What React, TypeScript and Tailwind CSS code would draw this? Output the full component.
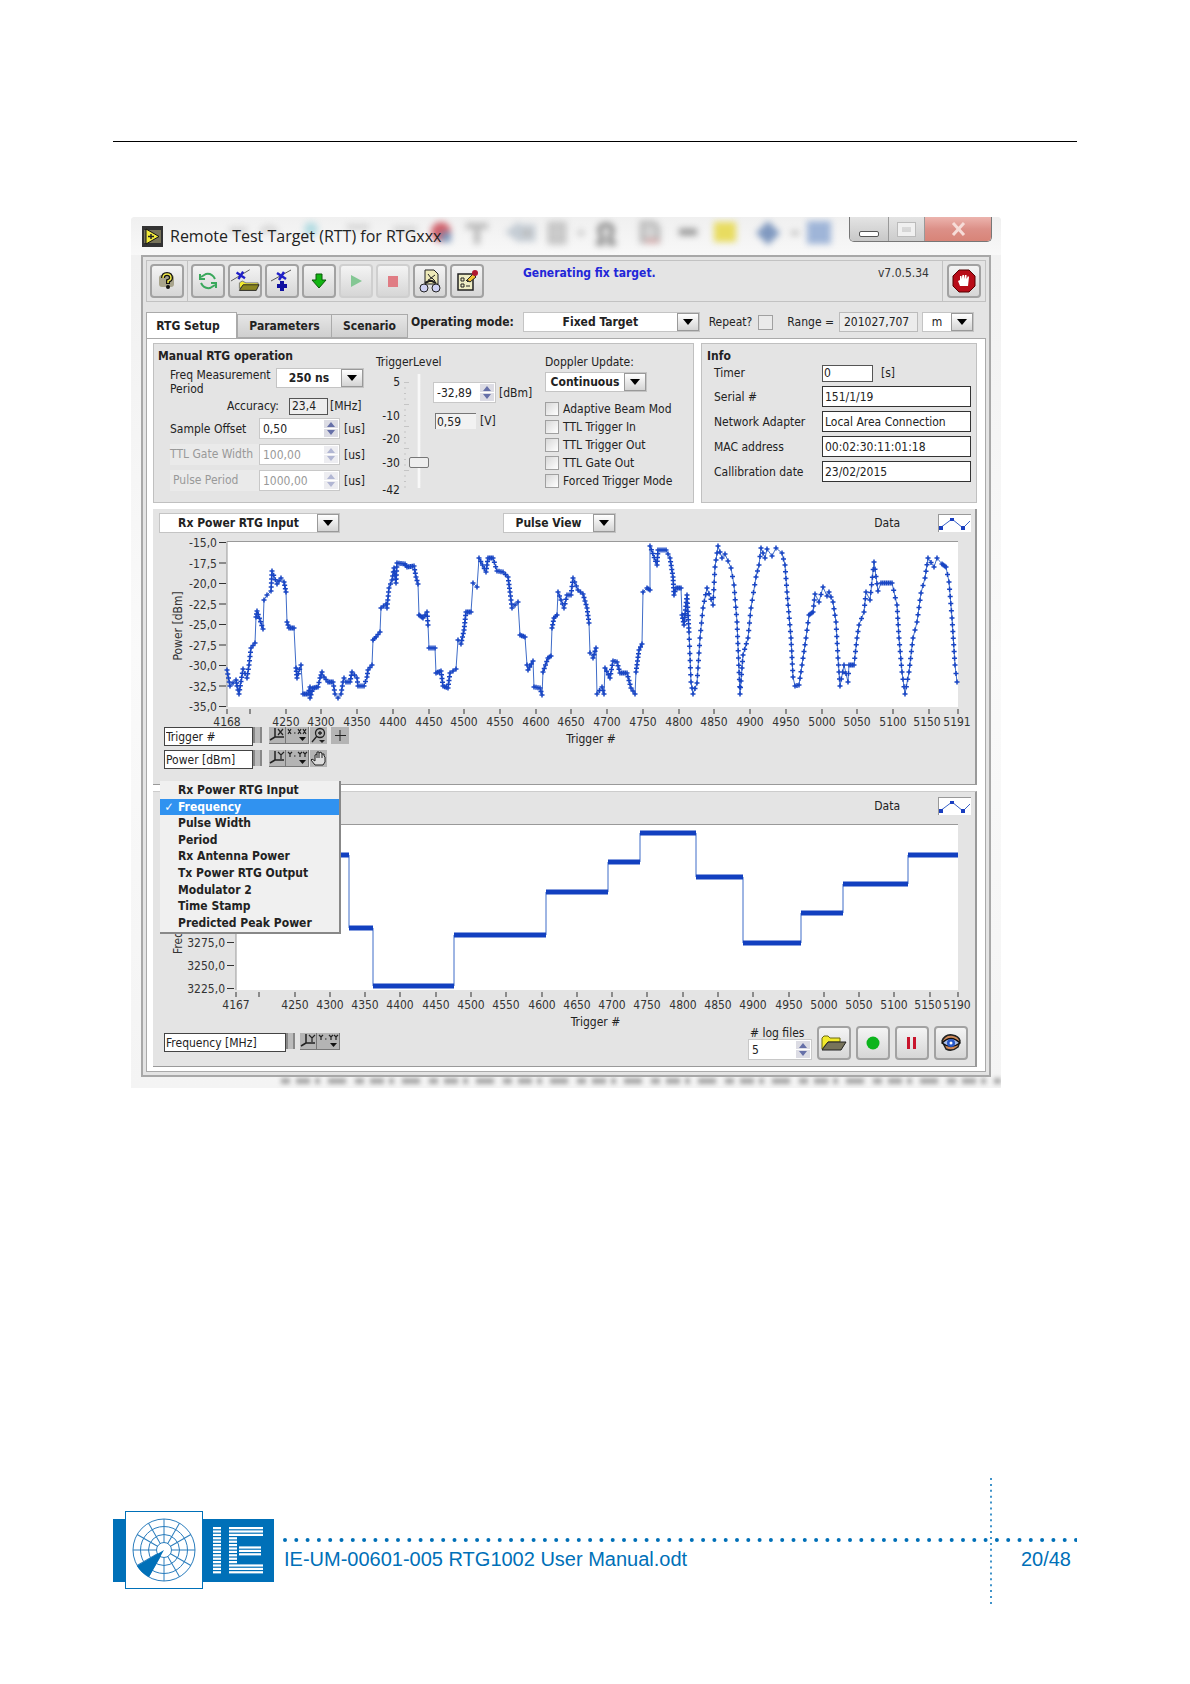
import type { ReactNode } from "react";

const rxPower: [number, number][] = [
  [0, 128], [3, 144], [9, 138], [10, 144], [12, 152], [16, 127], [20, 136], [22, 123], [24, 106], [28, 101], [29, 75], [30, 69],
  [36, 87], [37, 58], [40, 53], [44, 49], [45, 29], [50, 42], [54, 36], [57, 40], [59, 50], [60, 80], [62, 86], [67, 86],
  [69, 126], [70, 136], [74, 123], [76, 152], [81, 152], [83, 145], [83, 156], [86, 146], [91, 145], [93, 136], [95, 130], [97, 135],
  [101, 140], [106, 140], [108, 152], [111, 156], [114, 152], [116, 140], [117, 136], [119, 140], [123, 140], [125, 130], [130, 136],
  [131, 144], [137, 144], [140, 135], [141, 128], [145, 123], [146, 98], [149, 95], [153, 90], [154, 66], [159, 62], [160, 66],
  [162, 46], [165, 38], [167, 26], [169, 41], [170, 21], [178, 22], [180, 25], [187, 24], [189, 35], [191, 42], [192, 73], [196, 76],
  [200, 70], [201, 83], [202, 106], [208, 106], [209, 131], [214, 129], [216, 144], [221, 146], [223, 131], [229, 127], [231, 98],
  [234, 102], [237, 88], [239, 70], [244, 70], [246, 41], [250, 45], [252, 16], [259, 30], [261, 16], [266, 16], [270, 29],
  [276, 30], [281, 35], [283, 50], [285, 66], [291, 60], [293, 93], [298, 95], [300, 123], [301, 128], [306, 119], [307, 145],
  [313, 146], [315, 153], [316, 130], [321, 116], [324, 114], [325, 86], [327, 76], [330, 73], [331, 50], [337, 66], [340, 53],
  [344, 53], [346, 36], [351, 48], [356, 52], [360, 66], [362, 81], [363, 111], [366, 116], [369, 106], [370, 152], [375, 145],
  [377, 152], [378, 126], [383, 136], [386, 119], [390, 120], [393, 131], [400, 131], [404, 146], [408, 152], [409, 130],
  [412, 108], [415, 102], [416, 50], [420, 46], [423, 48], [423, 4], [430, 23], [431, 8], [439, 8], [443, 16], [446, 35],
  [447, 53], [449, 46], [454, 46], [455, 73], [457, 83], [460, 53], [462, 90], [464, 140], [466, 152], [470, 141], [473, 96],
  [476, 66], [480, 46], [486, 63], [488, 25], [491, 4], [495, 16], [498, 12], [504, 26], [507, 43], [510, 80], [513, 152],
  [516, 113], [521, 96], [524, 66], [529, 35], [532, 23], [534, 6], [538, 16], [540, 7], [545, 14], [549, 6], [555, 11],
  [558, 23], [560, 50], [564, 96], [566, 135], [568, 144], [572, 143], [575, 123], [579, 96], [582, 73], [586, 70], [588, 52],
  [592, 60], [596, 45], [600, 54], [602, 50], [606, 60], [609, 80], [611, 116], [613, 144], [617, 123], [621, 140], [622, 123],
  [627, 123], [630, 96], [632, 83], [637, 70], [639, 50], [643, 58], [647, 20], [651, 49], [654, 41], [665, 41], [670, 63],
  [672, 96], [675, 130], [678, 152], [682, 130], [686, 96], [690, 80], [694, 51], [698, 36], [701, 16], [707, 25], [710, 16],
  [715, 22], [719, 25], [722, 40], [725, 76], [728, 123], [730, 140],
];

// start, end, level
const freqSteps = [
  [0, 113, 31], [113, 137, 104], [137, 218, 162], [218, 310, 111], [310, 372, 68], [372, 404, 38],
  [404, 460, 9], [460, 507, 53], [507, 565, 119], [565, 607, 89], [607, 672, 60], [672, 722, 31],
];

const menuItems = [
  "Rx Power RTG Input", "Frequency", "Pulse Width", "Period", "Rx Antenna Power",
  "Tx Power RTG Output", "Modulator 2", "Time Stamp", "Predicted Peak Power",
];

const crossMarks = () => {
  let d = "";
  rxPower.forEach(([x, y], i) => {
    const [nx, ny] = rxPower[i + 1] ?? [x, y];
    const steep = Math.abs(ny - y) > 21 && Math.abs(nx - x) < 3 && x < 460;
    const flat = Math.abs(ny - y) < 4;
    const step = flat ? 2 : x > 460 ? 7 : 4;
    const n = steep ? 1 : Math.max(1, Math.round(Math.hypot(nx - x, ny - y) / step));
    for (let k = 0; k < n; k++) {
      const cx = x + ((nx - x) * k) / n;
      const cy = y + ((ny - y) * k) / n;
      d += `M${cx - 2.5} ${cy}h5M${cx} ${cy - 2.5}v5`;
    }
  });
  return d;
};

const Combo = ({ label, value, className, bold = true }: { label: string; value: string; className: string; bold?: boolean }) => (
  <div className={`flex h-5 items-stretch border border-[#c4c4c4] bg-white ${className}`}>
    <select aria-label={label} className={`min-w-0 flex-1 appearance-none bg-white px-1 text-center whitespace-pre outline-none ${bold ? "font-bold" : ""}`}>
      <option>{value}</option>
    </select>
    <span className="pointer-events-none flex w-[22px] items-center justify-center border border-[#999] bg-linear-to-b from-white to-[#d4d4d4]">
      <svg width="10" height="6"><path d="M0 0h10L5 6z" fill="#000" /></svg>
    </span>
  </div>
);

const Spinner = ({ id, label, value, className, disabled }: { id?: string; label?: string; value: string; className: string; disabled?: boolean }) => (
  <div className={`flex h-[21px] items-center border border-[#c8c8c8] bg-white pr-px ${className}`}>
    <input id={id} aria-label={label} defaultValue={value} disabled={disabled} className="w-0 min-w-0 flex-1 pl-[3px] outline-none disabled:text-[#999]" />
    <svg width="14" height="17" className={disabled ? "opacity-50" : ""}>
      <rect width="14" height="17" fill="#dcdce4" />
      <path d="M7 2l4 5H3zM7 15l4-5H3z" fill="#6670a8" />
      <path d="M0 8.5h14" stroke="#fff" />
    </svg>
  </div>
);

const ToolButton = ({ label, faded, children }: { label: string; faded?: boolean; children: ReactNode }) => (
  <button
    aria-label={label}
    className={`flex size-[34px] shrink-0 items-center justify-center rounded-[4px] border-2 bg-linear-to-b from-[#f4f4f4] to-[#d6d6d6] ${faded ? "border-[#cfcfcf]" : "border-[#a2a2a2]"}`}
  >
    {children}
  </button>
);

const CheckBox = ({ label }: { label: string }) => (
  <label className="flex h-[18px] items-center gap-1 whitespace-nowrap">
    <input type="checkbox" className="size-[14px] appearance-none border border-[#a0a0a0] bg-linear-to-br from-[#d8d8d8] to-white" />
    {label}
  </label>
);

const Folder = () => (
  <svg width="26" height="18" viewBox="0 0 26 18">
    <path d="M1 15V4l2-2h4l2 2h10v4H7z" fill="#f2ea2c" stroke="#6c6a10" />
    <path d="M1 16L7 8h18l-5 8z" fill="#77735a" stroke="#222" />
  </svg>
);

const Legend = () => (
  <svg width="33" height="18" className="border-t border-l border-[#999] bg-white">
    <path d="M1 13L13 4l11 9 7-7" fill="none" stroke="#3a62c8" />
    <path d="M0 11h4v4H0zM11 3h4v3h-4zM22 11h4v4h-4z" fill="#1a3fc0" />
  </svg>
);

const ScaleTools = ({ axis }: { axis: "X" | "Y" }) => (
  <div className="flex">
    <button aria-label={`${axis} scale lock`} className="h-[17px] bg-[#b4b4b4]">
      <svg width="17" height="17" viewBox="0 0 17 17">
        <path d="M0 16.500h17M16.500 0v17" stroke="#777" />
        <path d="M1 13l5-3M6 1v9h9" fill="none" stroke="#222" strokeWidth="1.500" />
        <path d={axis === "X" ? "M9 2l5 6M14 2l-5 6" : "M9 2l3 3 3-3M12 5v4"} fill="none" stroke="#222" strokeWidth="1.200" />
      </svg>
    </button>
    <button aria-label={`${axis} scale format`} className="h-[17px] bg-[#b4b4b4]">
      <svg width="23" height="17" viewBox="0 0 23 17">
        <path d="M0 16.500h23M22.500 0v17" stroke="#777" />
        <path
          d={axis === "X" ? "M2 2l3 5M5 2l-3 5M12 2l3 5M15 2l-3 5M17 2l3 5M20 2l-3 5M8 6h1.500" : "M2 2l2 2 2-2M4 4v3M12 2l2 2 2-2M14 4v3M17 2l2 2 2-2M19 4v3M8 6h1.500"}
          fill="none" stroke="#222" strokeWidth="1.200"
        />
        <path d="M13 10h7l-3.500 4z" fill="#111" />
      </svg>
    </button>
  </div>
);

const ScaleName = ({ value, className }: { value: string; className: string }) => (
  <div className="flex">
    <input aria-label="Scale name" defaultValue={value} className={`h-[19px] border border-[#444] bg-white pl-px outline-none ${className}`} />
    <span className="h-4 w-[9px] border-x-2 border-[#888] bg-[#bbb]" />
  </div>
);

const TimeAxis = ({ first, last, left }: { first: number; last: number; left: number }) => {
  const scale = (805 - left) / (last - first);
  const ticks = Array.from({ length: 20 }, (_, i) => 4200 + i * 50);
  return (
    <g textAnchor="middle" fill="#333">
      {[first, ...ticks, last].map((t) => {
        const x = Math.round(left + (t - first) * scale);
        return (
          <g key={t}>
            <path d={`M${x} 172v5`} stroke="#333" />
            {t !== 4200 && <text x={t === last ? x - 1 : t === 5150 ? x - 2 : x} y={189}>{t}</text>}
          </g>
        );
      })}
    </g>
  );
};

const PowerPlot = () => (
  <svg viewBox="0 0 822 194" className="w-full text-[12px]">
    <rect x="74" y="5" width="731" height="165" fill="#fff" />
    <path d="M74 170V4.500h731" fill="none" stroke="#999" />
    <g textAnchor="end" fill="#333">
      {["-15,0", "-17,5", "-20,0", "-22,5", "-25,0", "-27,5", "-30,0", "-32,5", "-35,0"].map((t, i) => (
        <g key={t}>
          <text x="64" y={10 + i * 20.500}>{t}</text>
          <path d={`M66 ${5.500 + i * 20.500}h7`} stroke="#333" />
        </g>
      ))}
    </g>
    <text transform="translate(29 89) rotate(-90)" textAnchor="middle" fill="#333">Power [dBm]</text>
    <g transform="translate(74 5)" fill="none">
      <polyline points={rxPower.map((p) => p.join()).join(" ")} stroke="#3f6cc8" />
      <path d={crossMarks()} stroke="#1845c4" strokeWidth="1.500" />
    </g>
    <TimeAxis first={4168} last={5191} left={74} />
  </svg>
);

const FrequencyPlot = () => (
  <svg viewBox="0 0 822 194" className="w-full text-[12px]">
    <rect x="83" y="5" width="722" height="165" fill="#fff" />
    <path d="M83 170V4.500h722" fill="none" stroke="#999" />
    <g textAnchor="end" fill="#333">
      {[3275, 3250, 3225].map((t, i) => (
        <g key={t}>
          <text x="72" y={127 + i * 23}>{t},0</text>
          <path d={`M74 ${122.500 + i * 23}h7`} stroke="#333" />
        </g>
      ))}
    </g>
    <text transform="translate(29 134) rotate(-90)" fill="#333">Frequency [MHz]</text>
    <g transform="translate(83 4)" fill="none">
      <polyline points={freqSteps.map(([a, b, y]) => `${a},${y} ${b},${y}`).join(" ")} stroke="#3f6cc8" />
      {freqSteps.map(([a, b, y]) => (
        <path key={a} d={`M${a} ${y}H${b}`} stroke="#1240c0" strokeWidth="5" />
      ))}
    </g>
    <TimeAxis first={4167} last={5190} left={83} />
  </svg>
);

const TitleBar = () => (
  <div className="relative flex h-[38px] items-start justify-between overflow-hidden bg-linear-to-b from-[#f0f0f0] to-[#f8f8f8]">
    <svg className="absolute inset-0 blur-[3px]" width="870" height="38" aria-hidden="true">
      <g fill="none" stroke="#bbb" strokeWidth="5">
        <path d="M98 13h18M130 16q8-10 16 0M216 10h22M262 12h24" opacity=".6" />
        <path d="M335 9h22M346 9v18" strokeWidth="6" />
        <path d="M378 15l8-6v12zM390 10h12v12h-12z" fill="#bbb" stroke="#c4ccd4" />
        <path d="M419 7h14v18h-14zM447 16h6" fill="#ccc" stroke="#c4c4c4" />
        <path d="M465 26h6v-6q-6-12 4-12t4 12v6h6" stroke="#8c8c8c" />
        <path d="M511 6h12l4 5v13h-16z" fill="#d4d4d4" stroke="#bbb" />
        <path d="M548 15h18" stroke="#999" strokeWidth="7" />
      </g>
      <path d="M514 24h14" stroke="#e0a0a0" strokeWidth="3" />
      <circle cx="310" cy="15" r="10" fill="#d0606a" />
      <path d="M310 15h10v10h-10z" fill="#7c94b8" />
      <circle cx="180" cy="12" r="7" fill="#b4dce2" />
      <rect x="583" y="5" width="22" height="20" fill="#e8dc60" />
      <path d="M637 4l12 12-12 12-12-12z" fill="#7f98bf" />
      <rect x="676" y="4" width="24" height="23" fill="#9fb5d8" />
      <path d="M660 16h8" stroke="#bbb" strokeWidth="4" />
    </svg>
    <div className="relative flex items-center gap-[7px] pt-[7px] pl-[11px]">
      <svg width="21" height="21" viewBox="0 0 21 21">
        <rect width="21" height="21" fill="#333" />
        <path d="M2 4h17v13H2z" fill="#77735a" />
        <path d="M4 3l13 7.500L4 18z" fill="#f4ec3c" stroke="#111" />
        <path d="M6 10.500h6M9 8v5" stroke="#222" strokeWidth="1.500" />
      </svg>
      <h1 className="font-['Open_Sans','Noto_Sans',sans-serif] text-[16px] leading-6 text-[#222]">Remote Test Target (RTT) for RTGxxx</h1>
    </div>
    <div className="relative mr-[9px] flex h-[25px] overflow-hidden rounded-b-[5px] border border-t-0 border-[#777]">
      <button aria-label="Minimize" className="flex w-[39px] items-end justify-center border-r border-[#999] bg-linear-to-b from-[#e4e4e4] to-[#c8c8c8] pb-1">
        <span className="h-[6px] w-5 rounded-[2px] border border-[#555] bg-white" />
      </button>
      <button aria-label="Maximize" className="flex w-9 items-center justify-center border-r border-[#999] bg-linear-to-b from-[#e4e4e4] to-[#ccc]">
        <span className="h-[13px] w-[17px] border-4 border-[#f0f0f0] outline outline-[#bbb]" />
      </button>
      <button aria-label="Close" className="flex w-[66px] items-center justify-center bg-linear-to-b from-[#ecb4ae] via-[#dc9088] to-[#d88478]">
        <svg width="15" height="14"><path d="M2 1l11 12M13 1L2 13" stroke="#f6dcd8" strokeWidth="3" /></svg>
      </button>
    </div>
  </div>
);

const Toolbar = () => (
  <div className="flex h-[42px] items-stretch border border-[#c2c2c2]">
    <div className="flex items-center border-r border-[#c2c2c2] px-[3px]">
      <ToolButton label="Help">
        <svg width="18" height="18" viewBox="0 0 18 18">
          <rect x="1" y="3" width="15" height="12" rx="3" fill="#a8a48c" />
          <path d="M5 6q0-4 4-4t4 4q0 2-3 3v3" fill="none" stroke="#111" strokeWidth="4" />
          <path d="M5 6q0-4 4-4t4 4q0 2-3 3v2" fill="none" stroke="#f2ea4a" strokeWidth="1.500" />
          <circle cx="10" cy="15" r="2" fill="#111" />
        </svg>
      </ToolButton>
    </div>
    <div className="flex items-center gap-[3px] pl-[3px]">
      <ToolButton label="Refresh">
        <svg width="20" height="20" viewBox="0 0 20 20" fill="none" stroke="#3aa85c" strokeWidth="2">
          <path d="M17 8Q14 2 8 3L3 6M2 3v5h5M3 12q3 6 9 5l5-3M18 17v-5h-5" />
        </svg>
      </ToolButton>
      <ToolButton label="Open trajectory">
        <svg width="32" height="28" viewBox="0 0 32 28">
          <path d="M1 14L21 2" stroke="#555" />
          <path d="M7 5l9 6M14 4l-5 8" stroke="#2020c8" strokeWidth="2.500" />
          <path d="M10 22v-6l3-2 4 2h13v3H15z" fill="#f2ea2c" stroke="#777" />
          <path d="M10 24l4-6h17l-3 6z" fill="#8a8420" stroke="#222" />
        </svg>
      </ToolButton>
      <ToolButton label="Add point">
        <svg width="26" height="26" viewBox="0 0 26 26">
          <path d="M2 13L22 2" stroke="#555" />
          <path d="M8 5l9 6M15 4l-5 8" stroke="#2020c8" strokeWidth="2.500" />
          <path d="M13 13v10M8 18h10" stroke="#1010a0" strokeWidth="4" />
        </svg>
      </ToolButton>
      <ToolButton label="Download">
        <svg width="16" height="16"><path d="M5 1h6v6h4l-7 8-7-8h4z" fill="#12b512" stroke="#0a5a0a" /></svg>
      </ToolButton>
      <ToolButton label="Play" faded>
        <svg width="14" height="14"><path d="M2 1l11 6-11 6z" fill="#84c794" /></svg>
      </ToolButton>
      <ToolButton label="Stop" faded>
        <svg width="12" height="12"><path d="M1 1h10v11H1z" fill="#e07c84" /></svg>
      </ToolButton>
      <ToolButton label="View log">
        <svg width="24" height="26" viewBox="0 0 24 26" stroke="#222">
          <path d="M7 2h9l4 4v10H7z" fill="#eeeab8" />
          <path d="M10 6l3 4 4-3M10 12l4-2 3 3" fill="none" />
          <path d="M7 15l4-2h3l4 2" fill="none" strokeWidth="2" />
          <circle cx="6" cy="20" r="4" fill="#cfd2f4" />
          <circle cx="18" cy="20" r="4" fill="#cfd2f4" />
        </svg>
      </ToolButton>
      <ToolButton label="Edit configuration">
        <svg width="24" height="24" viewBox="0 0 24 24">
          <path d="M3 5h15v16H3z" fill="#eeecc4" stroke="#222" strokeWidth="1.500" />
          <path d="M6 9h3v3H6zM6 15h3v3H6zM11 11l2 2 3-4M11 17h4" fill="none" stroke="#222" />
          <path d="M12 11l6-6 3 3-6 5z" fill="#f0c030" stroke="#222" />
          <circle cx="20" cy="4" r="3" fill="#b01830" />
        </svg>
      </ToolButton>
    </div>
    <p className="ml-[39px] flex-1 pt-1 font-bold leading-4 text-[#2226d8]">Generating fix target.</p>
    <p className="mr-[13px] pt-1 leading-4 text-[#333]">v7.0.5.34</p>
    <div className="flex items-center border-l border-[#c2c2c2] px-1">
      <ToolButton label="Exit">
        <svg width="24" height="24" viewBox="0 0 24 24">
          <path d="M7 1h10l6 6v10l-6 6H7l-6-6V7z" fill="#b80c18" stroke="#500" />
          <path d="M8 17l-2-5 2-1V7h1.500v3l1-4H12v4l1-4h1.500v4l1.500-3 1 1-1 9z" fill="#fff" />
        </svg>
      </ToolButton>
    </div>
  </div>
);

const TabRow = () => (
  <div className="flex h-9 items-center pt-1">
    <div role="tablist" className="flex items-end self-end font-bold">
      <button role="tab" aria-selected="true" className="h-[26px] w-[91px] border border-b-0 border-[#aaa] bg-white pr-[7px]">RTG Setup</button>
      <button role="tab" aria-selected="false" className="h-6 w-[95px] border border-[#aaa] bg-linear-to-b from-[#e6e6e6] to-[#cfcfcf]">Parameters</button>
      <button role="tab" aria-selected="false" className="h-6 w-[76px] border border-l-0 border-[#aaa] bg-linear-to-b from-[#e6e6e6] to-[#cfcfcf]">Scenario</button>
    </div>
    <span className="ml-[3px] w-28 whitespace-nowrap font-bold">Operating mode:</span>
    <Combo label="Operating mode" value="Fixed Target" className="flex-1" />
    <label className="ml-[9px] flex items-center gap-[6px]">
      Repeat?
      <input type="checkbox" className="size-[15px] appearance-none border border-[#a0a0a0] bg-[#eaeaea]" />
    </label>
    <label htmlFor="range" className="ml-[14px] whitespace-nowrap">Range =</label>
    <input id="range" defaultValue="201027,707" className="ml-[5px] h-5 w-[79px] border border-[#bbb] bg-[#ececec] pl-1 outline-none" />
    <Combo label="Range unit" value="m" bold={false} className="mr-3 ml-1 w-[52px]" />
  </div>
);

const ManualPanel = () => (
  <fieldset className="flex h-40 min-w-0 flex-1 border border-[#c0c0c0] bg-[#e4e4e4]">
    <div className="w-[222px] pt-1 pl-1">
      <h2 className="text-[12px] leading-4 font-bold">Manual RTG operation</h2>
      <div className="flex items-start justify-between pt-1 pl-3">
        <span className="leading-[14px] whitespace-nowrap">Freq Measurement<br />Period</span>
        <Combo label="Freq Measurement Period" value="250 ns" className="mr-3 w-[88px]" />
      </div>
      <div className="flex h-5 items-center justify-end gap-[2px]">
        <label htmlFor="accuracy" className="pr-2">Accuracy:</label>
        <input id="accuracy" readOnly defaultValue="23,4" className="h-[17px] w-[39px] border border-[#555] bg-[#eee] pl-[2px]" />
        <span className="w-[46px]">[MHz]</span>
      </div>
      <div className="grid grid-cols-[89px_81px_1fr] items-center gap-y-[5px] pt-[2px] pl-3">
        <label htmlFor="offset">Sample Offset</label>
        <Spinner id="offset" value="0,50" className="w-full" />
        <span className="pl-1">[us]</span>
        <label htmlFor="gate" className="h-[21px] bg-[#eaeaea] leading-[21px] whitespace-nowrap text-[#999]">TTL Gate Width</label>
        <Spinner id="gate" value="100,00" className="w-full" disabled />
        <span className="pl-1">[us]</span>
        <label htmlFor="period" className="h-[21px] bg-[#eaeaea] pl-[3px] leading-[21px] text-[#999]">Pulse Period</label>
        <Spinner id="period" value="1000,00" className="w-full" disabled />
        <span className="pl-1">[us]</span>
      </div>
    </div>
    <div className="w-[169px] pt-[10px]">
      <label htmlFor="level" className="block leading-4">TriggerLevel</label>
      <div className="flex">
        <div className="grid w-6 grid-rows-[34px_23px_24px_27px_16px] pt-1 text-right leading-4">
          <span>5</span><span>-10</span><span>-20</span><span>-30</span><span>-42</span>
        </div>
        <svg width="7" height="118" className="ml-[2px]">
          {Array.from({ length: 20 }, (_, i) => <path key={i} d={`M2 ${12.500 + i * 5.500}h${i % 4 ? 2 : 5}`} stroke="#c4c4c4" />)}
        </svg>
        <input
          id="level" type="range" min="-42" max="5" defaultValue="-33"
          className="mt-1 h-[114px] w-5 appearance-none bg-linear-to-r from-transparent from-40% via-white via-50% to-transparent to-60% [direction:rtl] [writing-mode:vertical-lr] [&::-webkit-slider-thumb]:h-[11px] [&::-webkit-slider-thumb]:w-5 [&::-webkit-slider-thumb]:appearance-none [&::-webkit-slider-thumb]:rounded-[2px] [&::-webkit-slider-thumb]:border [&::-webkit-slider-thumb]:border-[#777] [&::-webkit-slider-thumb]:bg-[#eee]"
        />
        <div className="pt-3 pl-1">
          <div className="flex items-center gap-[3px]">
            <Spinner label="Trigger level dBm" value="-32,89" className="w-[63px]" />
            <span>[dBm]</span>
          </div>
          <div className="flex items-center gap-1 pt-[9px] pl-[2px]">
            <input aria-label="Trigger level volts" defaultValue="0,59" className="h-4 w-[41px] border-t border-l border-[#777] bg-[#f2f2f2] pl-px outline-none" />
            <span>[V]</span>
          </div>
        </div>
      </div>
    </div>
    <div className="flex-1 pt-[10px]">
      <span className="block leading-4">Doppler Update:</span>
      <Combo label="Doppler Update" value="Continuous" className="mt-[2px] mb-2 w-[102px]" />
      {["Adaptive Beam Mod", "TTL Trigger In", "TTL Trigger Out", "TTL Gate Out", "Forced Trigger Mode"].map((t) => <CheckBox key={t} label={t} />)}
    </div>
  </fieldset>
);

const info = [
  ["Serial #", "151/1/19"],
  ["Network Adapter", "Local Area Connection"],
  ["MAC address", "00:02:30:11:01:18"],
  ["Callibration date", "23/02/2015"],
];

const InfoPanel = () => (
  <fieldset className="h-40 w-[276px] border border-[#c0c0c0] bg-[#e4e4e4] pt-1 pr-[5px] pl-[5px]">
    <h2 className="text-[12px] leading-4 font-bold">Info</h2>
    <div className="grid grid-cols-[108px_1fr] gap-y-1 pl-[7px]">
      <label htmlFor="timer" className="leading-[18px]">Timer</label>
      <div className="flex items-center gap-2">
        <input id="timer" defaultValue="0" className="h-[17px] w-[51px] border border-[#555] bg-white pl-px outline-none" />
        <span>[s]</span>
      </div>
      {info.map(([label, value]) => (
        <div key={label} className="col-span-2 grid grid-cols-subgrid items-center">
          <label htmlFor={label}>{label}</label>
          <input id={label} readOnly defaultValue={value} className="h-[21px] w-full border border-[#333] bg-white pl-[2px] outline-none" />
        </div>
      ))}
    </div>
  </fieldset>
);

const PowerPanel = () => (
  <section className="h-[276px] border-r-2 border-b border-[#999] bg-[#e4e4e4]">
    <div className="flex h-7 items-center">
      <Combo label="Upper graph source" value="Rx Power RTG Input" className="ml-[6px] w-[181px]" />
      <Combo label="View" value="Pulse  View" className="ml-[163px] w-[113px]" />
      <span className="mr-[38px] ml-auto">Data</span>
      <span className="mr-1"><Legend /></span>
    </div>
    <PowerPlot />
    <div className="-mt-1 grid grid-cols-[1fr_auto_1fr] pl-[11px]">
      <div className="flex flex-col gap-1">
        <div className="flex gap-[7px]">
          <ScaleName value="Trigger #" className="w-[89px]" />
          <div className="flex items-start gap-px">
            <ScaleTools axis="X" />
            <button aria-label="Zoom" className="bg-[#b4b4b4]">
              <svg width="17" height="17" viewBox="0 0 17 17" fill="none" stroke="#222" strokeWidth="1.300"><circle cx="10" cy="6" r="4.500" /><path d="M10 4v4M8 6h4M7 9l-5 6" /><path d="M9 13h6l-3 3z" fill="#222" stroke="none" /></svg>
            </button>
            <button aria-label="Cursor" className="ml-[3px] bg-[#b4b4b4]">
              <svg width="18" height="17"><path d="M9 3v11M4 8.500h11" stroke="#222" /></svg>
            </button>
          </div>
        </div>
        <div className="flex gap-[7px]">
          <ScaleName value="Power [dBm]" className="w-[89px]" />
          <div className="flex items-start gap-px">
            <ScaleTools axis="Y" />
            <button aria-label="Pan" className="bg-[#b4b4b4]">
              <svg width="17" height="17" viewBox="0 0 17 17"><path d="M5 15l-4-5 1-1 3 2V5l2-1V2h2v1l2-1 1 2h2v2l1 1v5l-2 3zM7 4v4M9 3v5M12 4v4" fill="#ddd" stroke="#222" /></svg>
            </button>
          </div>
        </div>
      </div>
      <span className="ml-[43px] pt-1 leading-4">Trigger #</span>
      <span />
    </div>
  </section>
);

const SourceMenu = () => (
  <ul role="menu" className="absolute -top-[11px] left-[7px] grid h-[153px] w-[181px] auto-rows-fr border-r-2 border-b-2 border-[#888] bg-[#f0f0f0] py-px font-bold">
    {menuItems.map((item) => {
      const active = item === "Frequency";
      return (
        <li key={item} role="none" className="min-h-0">
          <button role="menuitemradio" aria-checked={active} className={`flex h-full w-full items-center leading-4 ${active ? "bg-[#3092f0] text-white" : "text-[#222]"}`}>
            <span className="w-[18px] text-center">{active ? "✓" : ""}</span>
            {item}
          </button>
        </li>
      );
    })}
  </ul>
);

const FrequencyPanel = () => (
  <section className="relative h-[276px] border-t border-r-2 border-b border-[#999] border-t-[#ccc] bg-[#e4e4e4]">
    <div className="flex h-7 items-center justify-end">
      <span className="mr-[38px]">Data</span>
      <span className="mr-1"><Legend /></span>
    </div>
    <FrequencyPlot />
    <div className="-mt-1 grid grid-cols-[1fr_auto_1fr] pl-[11px]">
      <div className="flex gap-[5px] pt-[23px]">
        <ScaleName value="Frequency [MHz]" className="w-[122px]" />
        <ScaleTools axis="Y" />
      </div>
      <span className="ml-[52px] pt-1 leading-4">Trigger #</span>
      <div className="flex justify-end gap-[5px] pt-4 pr-[7px]">
        <div className="pt-px">
          <label htmlFor="logs" className="block pl-[2px] leading-3 whitespace-nowrap"># log files</label>
          <Spinner id="logs" value="5" className="w-16" />
        </div>
        <ToolButton label="Open log"><Folder /></ToolButton>
        <ToolButton label="Record">
          <svg width="16" height="16"><circle cx="8" cy="8" r="6.500" fill="#0cb41c" /></svg>
        </ToolButton>
        <ToolButton label="Pause">
          <svg width="14" height="14"><path d="M2 1h3v12H2zM8 1h3v12H8z" fill="#c8142c" /></svg>
        </ToolButton>
        <ToolButton label="Preview">
          <svg width="22" height="20" viewBox="0 0 22 20">
            <path d="M2 8Q5 1 12 2t8 6l-2 6q-6 5-12 2z" fill="#d08a5a" stroke="#222" strokeWidth="1.500" />
            <path d="M2 10q9-9 18 0-9 7-18 0z" fill="#a8bce8" stroke="#111" strokeWidth="1.500" />
            <circle cx="11" cy="10" r="4" fill="#2858c8" />
            <circle cx="11" cy="10" r="1.500" fill="#fff" />
          </svg>
        </ToolButton>
      </div>
    </div>
    <SourceMenu />
  </section>
);

const Logo = () => (
  <svg width="162" height="80" viewBox="0 0 162 80" role="img" aria-label="IE">
    <rect x="0" y="9" width="161" height="63" fill="#0070b8" />
    <rect x="12.500" y="1.500" width="77" height="77" fill="#fff" stroke="#0070b8" />
    <g fill="none" stroke="#2a7dbd">
      {[7.500, 15.500, 23.500, 31].map((r) => <circle key={r} cx="51" cy="40" r={r} />)}
      {Array.from({ length: 12 }, (_, i) => (
        <path key={i} d="M58.500 40H82" transform={`rotate(${i * 30} 51 40)`} />
      ))}
    </g>
    <path d="M51 40L24 56q4 7 12 11z" fill="#0070b8" />
    <g fill="#fff">
      {Array.from({ length: 14 }, (_, i) => {
        const y = 17 + i * 3.400;
        const wide = i < 3 || i > 10;
        return (
          <g key={i}>
            <rect x="100" y={y} width="8" height="2.200" />
            <rect x="116" y={y} width={wide ? 34 : 8} height="2.200" />
            {(i > 5 && i < 9) && <rect x="126" y={y - 1} width="22" height="2.200" />}
          </g>
        );
      })}
    </g>
  </svg>
);

const Footer = () => (
  <footer className="relative mt-auto mb-20 flex h-[126px] items-start font-['Liberation_Sans',Arial,sans-serif] text-[20px] text-[#0070b8]">
    <div className="pt-8"><Logo /></div>
    <div className="ml-[7px] flex-1 pt-[60px]">
      <svg className="block h-1 w-full"><line x1="3" y1="2" x2="100%" y2="2" stroke="#0070b8" strokeWidth="4" strokeLinecap="round" strokeDasharray="0 11.300" /></svg>
      <div className="flex justify-between pt-1 pr-[6px] pl-[2px] leading-[26px]">
        <span>IE-UM-00601-005 RTG1002 User Manual.odt</span>
        <span>20/48</span>
      </div>
    </div>
    <svg className="absolute inset-y-0 right-[85px] h-full w-[2px]"><line x1="1" y1="0" x2="1" y2="100%" stroke="#0070b8" strokeWidth="1.500" strokeDasharray="2 3.900" /></svg>
  </footer>
);

const App = () => (
  <div className="flex min-h-screen flex-col bg-white px-[113px] text-black">
    <hr className="mt-[141px] border-t border-black" />
    <main className="mt-[75px] mr-[76px] ml-[18px] overflow-hidden rounded-t-[4px] bg-linear-to-b from-[#f0f0f0] via-[#fafafa] to-[#f4f4f4] font-['DejaVu_Sans_Condensed','DejaVu_Sans',sans-serif] text-[12px] text-[#222]">
      <TitleBar />
      <div className="mx-[10px] border-2 border-[#a8a8a8] bg-[#e4e4e4] p-[3px]">
        <Toolbar />
        <TabRow />
        <div className="flex flex-col gap-[6px] border border-[#aaa] bg-white py-1 pr-2 pl-[6px]">
          <div className="flex gap-[7px]">
            <ManualPanel />
            <InfoPanel />
          </div>
          <PowerPanel />
          <FrequencyPanel />
        </div>
      </div>
      <svg className="block h-[11px] w-full blur-[2px]" aria-hidden="true">
        <line x1="150" y1="4" x2="100%" y2="4" stroke="#aaa" strokeWidth="6" strokeDasharray="9 6 14 5 5 8 18 9" />
      </svg>
    </main>
    <Footer />
  </div>
);

export default App;
